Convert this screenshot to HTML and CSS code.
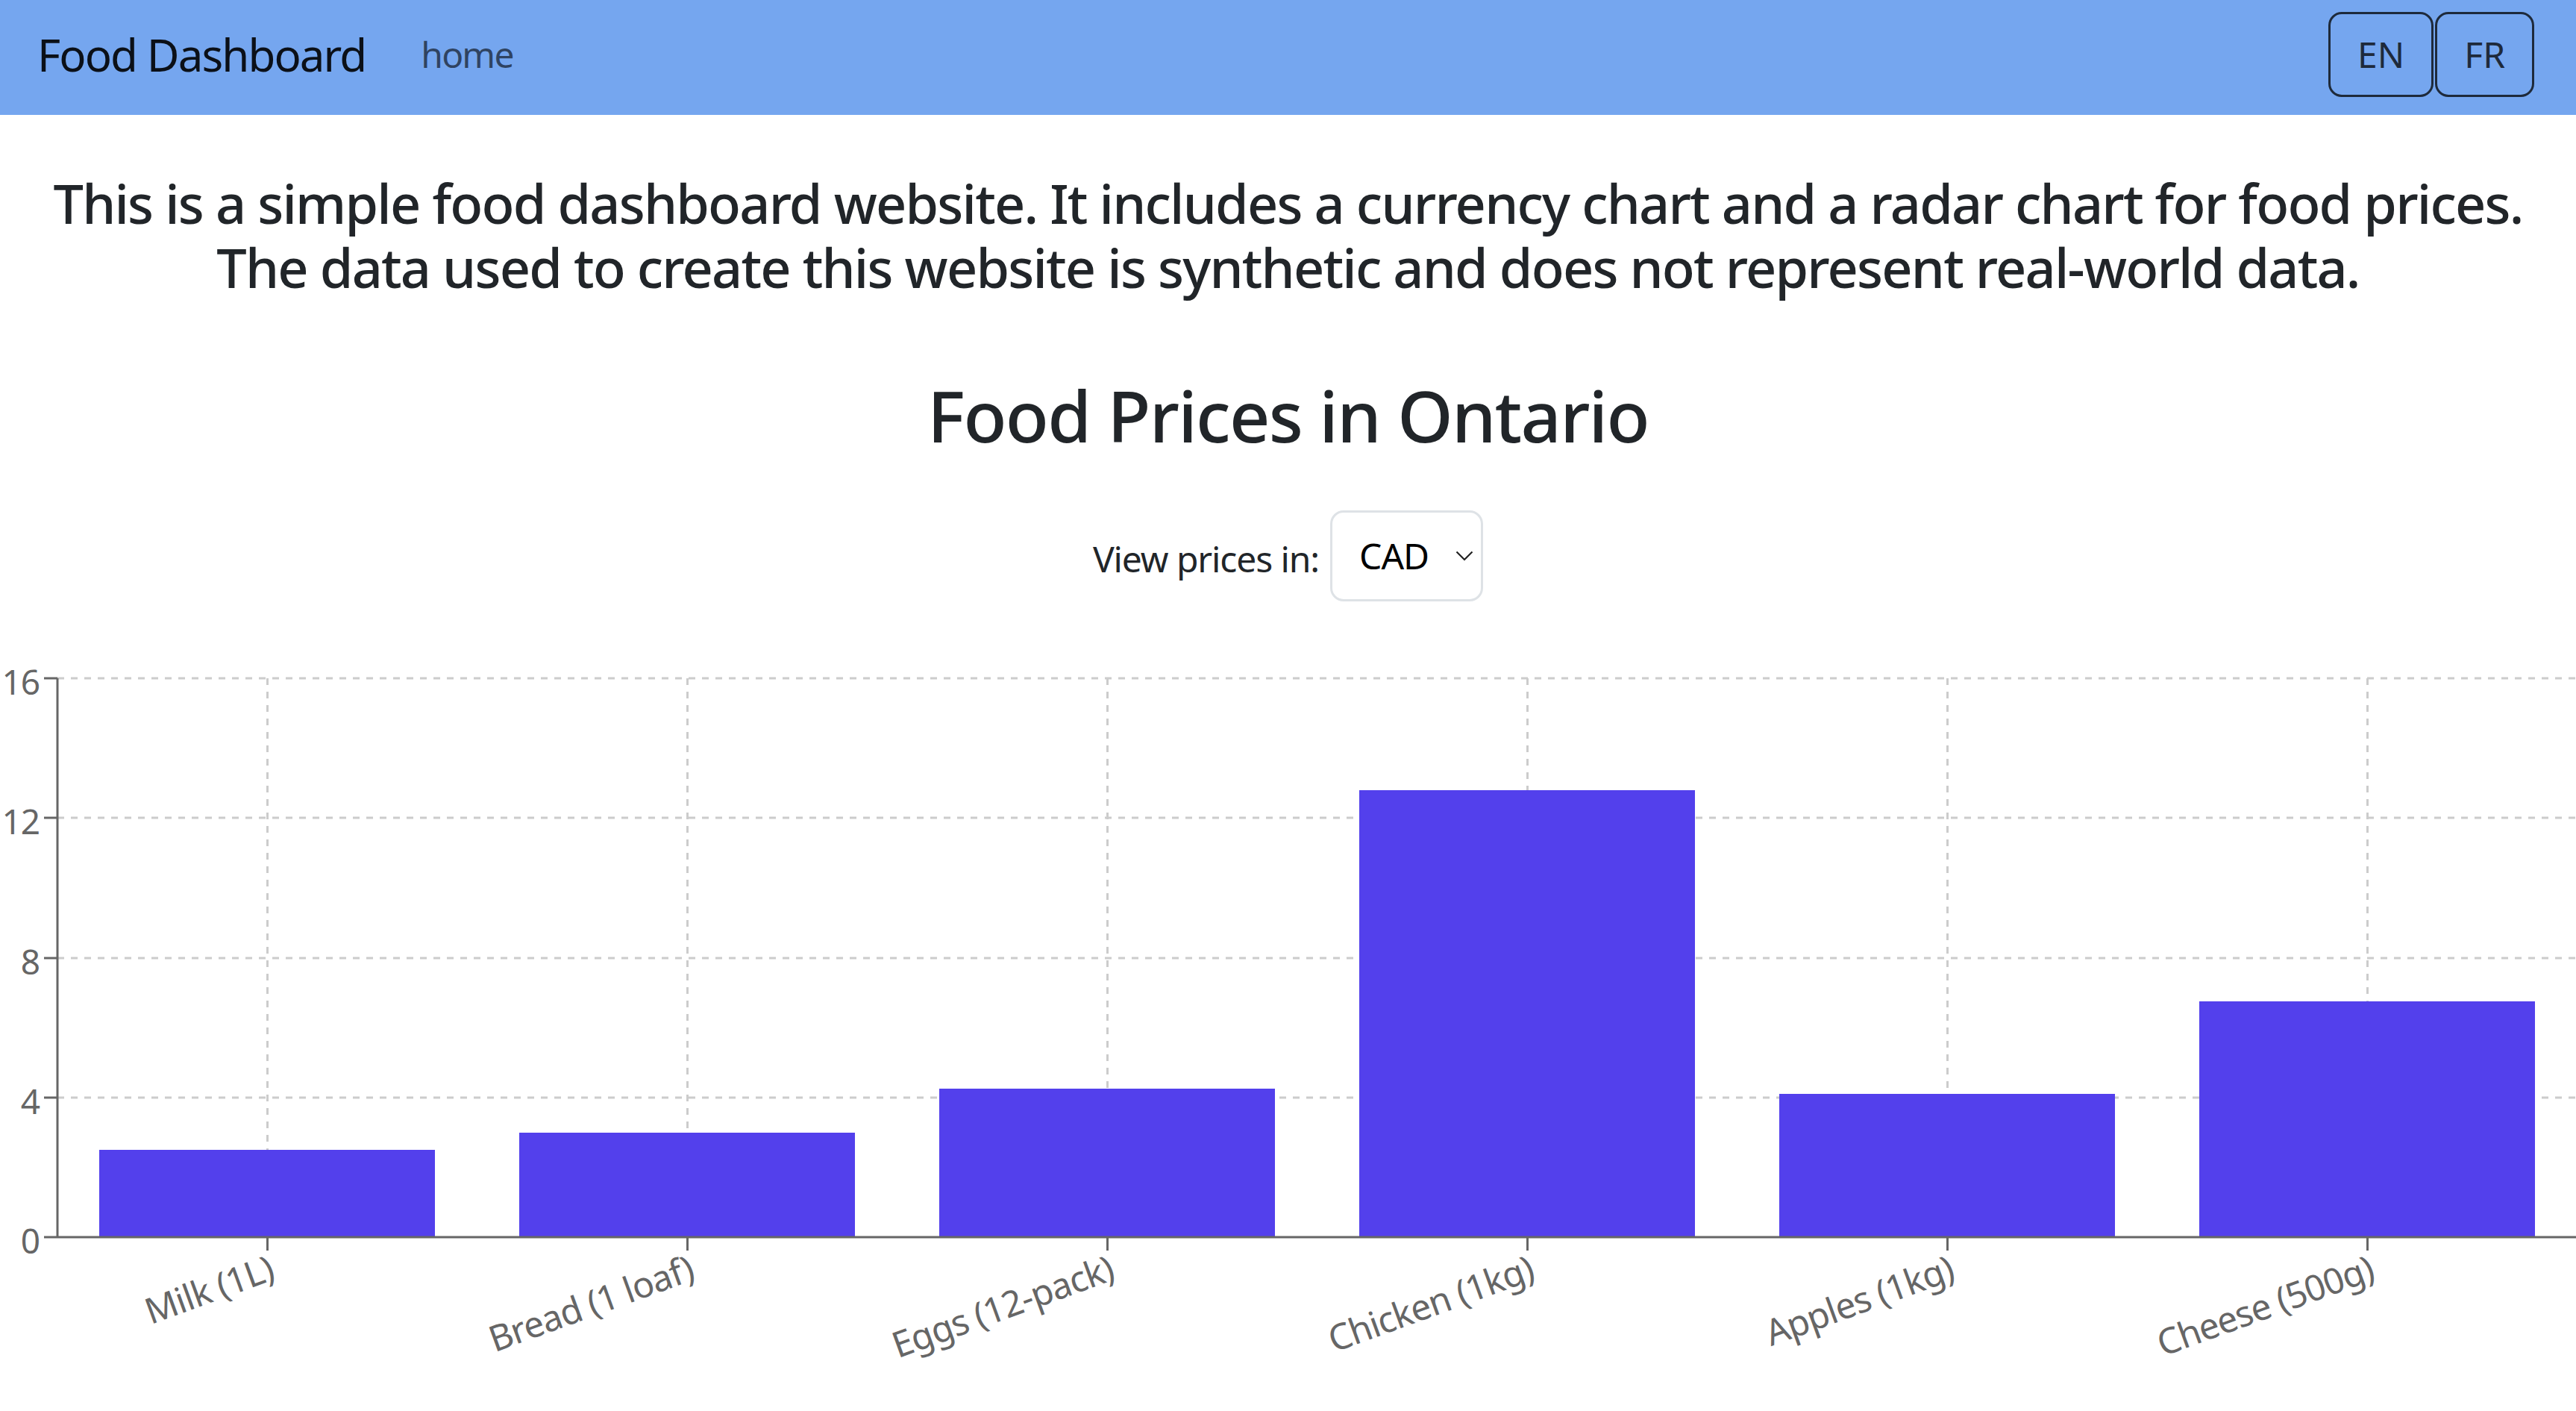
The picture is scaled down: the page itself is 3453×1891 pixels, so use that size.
FILE: index.html
```html
<!DOCTYPE html>
<html lang="en">
<head>
    <meta charset="UTF-8">
    <meta name="viewport" content="width=device-width, initial-scale=1.0">
    <title>Food Dashboard</title>
    <link rel="stylesheet" href="styles.css">
</head>
<body>
    <nav class="navbar">
        <div class="navbar-left">
            <span class="brand">Food Dashboard</span>
            <a class="nav-link" href="#">home</a>
        </div>
        <div class="lang-switch">
            <button class="lang-btn">EN</button>
            <button class="lang-btn">FR</button>
        </div>
    </nav>

    <main>
        <h4 class="intro">
            <span class="intro-line">This is a simple food dashboard website. It includes a currency chart and a radar chart for food prices.</span>
            <span class="intro-line">The data used to create this website is synthetic and does not represent real-world data.</span>
        </h4>

        <h2 class="title">Food Prices in Ontario</h2>

        <div class="currency-row">
            <label class="currency-label" for="currency">View prices in:</label>
            <div class="select-wrap">
                <select class="currency-select" id="currency">
                    <option>CAD</option>
                    <option>USD</option>
                    <option>EUR</option>
                </select>
                <svg class="select-arrow" width="24" height="14" viewBox="0 0 24 14">
                    <polyline points="1.5,1.5 12,12 22.5,1.5" fill="none" stroke="#222" stroke-width="2.2"/>
                </svg>
            </div>
        </div>

        <div class="chart">
            <svg class="chart-svg" width="3453" height="1041" viewBox="0 0 3453 1041">
                <!-- grid -->
                <g class="grid">
                    <line x1="77" y1="59" x2="3453" y2="59"/>
                    <line x1="77" y1="246" x2="3453" y2="246"/>
                    <line x1="77" y1="434" x2="3453" y2="434"/>
                    <line x1="77" y1="621" x2="3453" y2="621"/>
                    <line x1="358.5" y1="59" x2="358.5" y2="808"/>
                    <line x1="921.5" y1="59" x2="921.5" y2="808"/>
                    <line x1="1484.5" y1="59" x2="1484.5" y2="808"/>
                    <line x1="2047.5" y1="59" x2="2047.5" y2="808"/>
                    <line x1="2610.5" y1="59" x2="2610.5" y2="808"/>
                    <line x1="3173.5" y1="59" x2="3173.5" y2="808"/>
                </g>

                <!-- bars -->
                <g class="bars">
                    <rect x="133" y="691" width="450" height="117"/>
                    <rect x="696" y="668" width="450" height="140"/>
                    <rect x="1259" y="609" width="450" height="199"/>
                    <rect x="1822" y="209" width="450" height="599"/>
                    <rect x="2385" y="616" width="450" height="192"/>
                    <rect x="2948" y="492" width="450" height="316"/>
                </g>

                <!-- y axis -->
                <g class="axis">
                    <line x1="77" y1="59" x2="77" y2="808"/>
                    <line x1="59" y1="59" x2="77" y2="59"/>
                    <line x1="59" y1="246" x2="77" y2="246"/>
                    <line x1="59" y1="434" x2="77" y2="434"/>
                    <line x1="59" y1="621" x2="77" y2="621"/>
                    <line x1="59" y1="808" x2="77" y2="808"/>
                </g>
                <g class="tick-label y-labels">
                    <text x="53" y="81">16</text>
                    <text x="53" y="268">12</text>
                    <text x="53" y="456">8</text>
                    <text x="53" y="643">4</text>
                    <text x="53" y="830">0</text>
                </g>

                <!-- x axis -->
                <g class="axis">
                    <line x1="77" y1="808" x2="3453" y2="808"/>
                    <line x1="358.5" y1="808" x2="358.5" y2="826"/>
                    <line x1="921.5" y1="808" x2="921.5" y2="826"/>
                    <line x1="1484.5" y1="808" x2="1484.5" y2="826"/>
                    <line x1="2047.5" y1="808" x2="2047.5" y2="826"/>
                    <line x1="2610.5" y1="808" x2="2610.5" y2="826"/>
                    <line x1="3173.5" y1="808" x2="3173.5" y2="826"/>
                </g>
                <g class="tick-label x-labels">
                    <text x="358.5" y="832" dy="0.71em" transform="rotate(-20 358.5 832)">Milk (1L)</text>
                    <text x="921.5" y="832" dy="0.71em" transform="rotate(-20 921.5 832)">Bread (1 loaf)</text>
                    <text x="1484.5" y="832" dy="0.71em" transform="rotate(-20 1484.5 832)">Eggs (12-pack)</text>
                    <text x="2047.5" y="832" dy="0.71em" transform="rotate(-20 2047.5 832)">Chicken (1kg)</text>
                    <text x="2610.5" y="832" dy="0.71em" transform="rotate(-20 2610.5 832)">Apples (1kg)</text>
                    <text x="3173.5" y="832" dy="0.71em" transform="rotate(-20 3173.5 832)">Cheese (500g)</text>
                </g>
            </svg>
        </div>
    </main>
</body>
</html>
```

FILE: styles.css
```css
body {
    margin: 0;
    font-family: "Noto Sans", "Open Sans", sans-serif;
    color: #212529;
    background-color: #ffffff;
}

/* top bar */
.navbar {
    display: flex;
    align-items: center;
    justify-content: space-between;
    height: 154px;
    box-sizing: border-box;
    padding: 0 56px 9px 50px;
    background-color: #75a6ef;
}
.navbar-left {
    display: flex;
    align-items: center;
}
.brand {
    font-size: 60px;
    line-height: 1.5;
    letter-spacing: -1.9px;
    color: rgba(0, 0, 0, 0.9);
    margin-right: 50px;
}
.nav-link {
    font-size: 48px;
    line-height: 1.5;
    letter-spacing: -1.8px;
    padding: 0 24px;
    color: rgba(0, 0, 0, 0.6);
    text-decoration: none;
}
.lang-switch {
    display: flex;
    gap: 2px;
}
.lang-btn {
    font-family: inherit;
    font-size: 48px;
    line-height: 1.5;
    padding: 18px 36px;
    border: 3px solid #1e2a3b;
    border-radius: 18px;
    background: transparent;
    color: #1e2a3b;
}

/* headings */
.intro {
    margin: 75px 0 0;
    font-size: 72px;
    font-weight: 500;
    line-height: 1.2;
    text-align: center;
    letter-spacing: -1.8px;
}
.intro-line {
    display: block;
    white-space: nowrap;
}
.title {
    margin: 97px 0 0;
    font-size: 95px;
    font-weight: 500;
    line-height: 1.2;
    letter-spacing: -1.7px;
    text-align: center;
}

/* currency picker */
.currency-row {
    margin-top: 71px;
    display: flex;
    justify-content: center;
    align-items: center;
    gap: 15px;
}
.currency-label {
    font-size: 48px;
    line-height: 1.5;
    letter-spacing: -1.1px;
    margin-top: 8px;
}
.select-wrap {
    position: relative;
}
.currency-select {
    appearance: none;
    display: block;
    width: 205px;
    height: 122px;
    padding: 0 0 0 36px;
    font-family: inherit;
    font-size: 48px;
    letter-spacing: -1px;
    color: #000;
    background-color: #fff;
    border: 3px solid #dee2e6;
    border-radius: 18px;
}
.select-arrow {
    position: absolute;
    left: 168px;
    top: 54px;
    pointer-events: none;
}

/* chart */
.chart {
    margin-top: 44px;
}
.chart-svg {
    display: block;
}
.grid line {
    stroke: #cccccc;
    stroke-width: 3;
    stroke-dasharray: 9 9;
}
.bars rect {
    fill: #5340ec;
}
.axis line {
    stroke: #666666;
    stroke-width: 3;
}
.tick-label text {
    font-family: "Noto Sans", "Open Sans", sans-serif;
    font-size: 48px;
    letter-spacing: -1px;
    fill: #666666;
    text-anchor: end;
}
.y-labels text {
    font-size: 46px;
}
```
